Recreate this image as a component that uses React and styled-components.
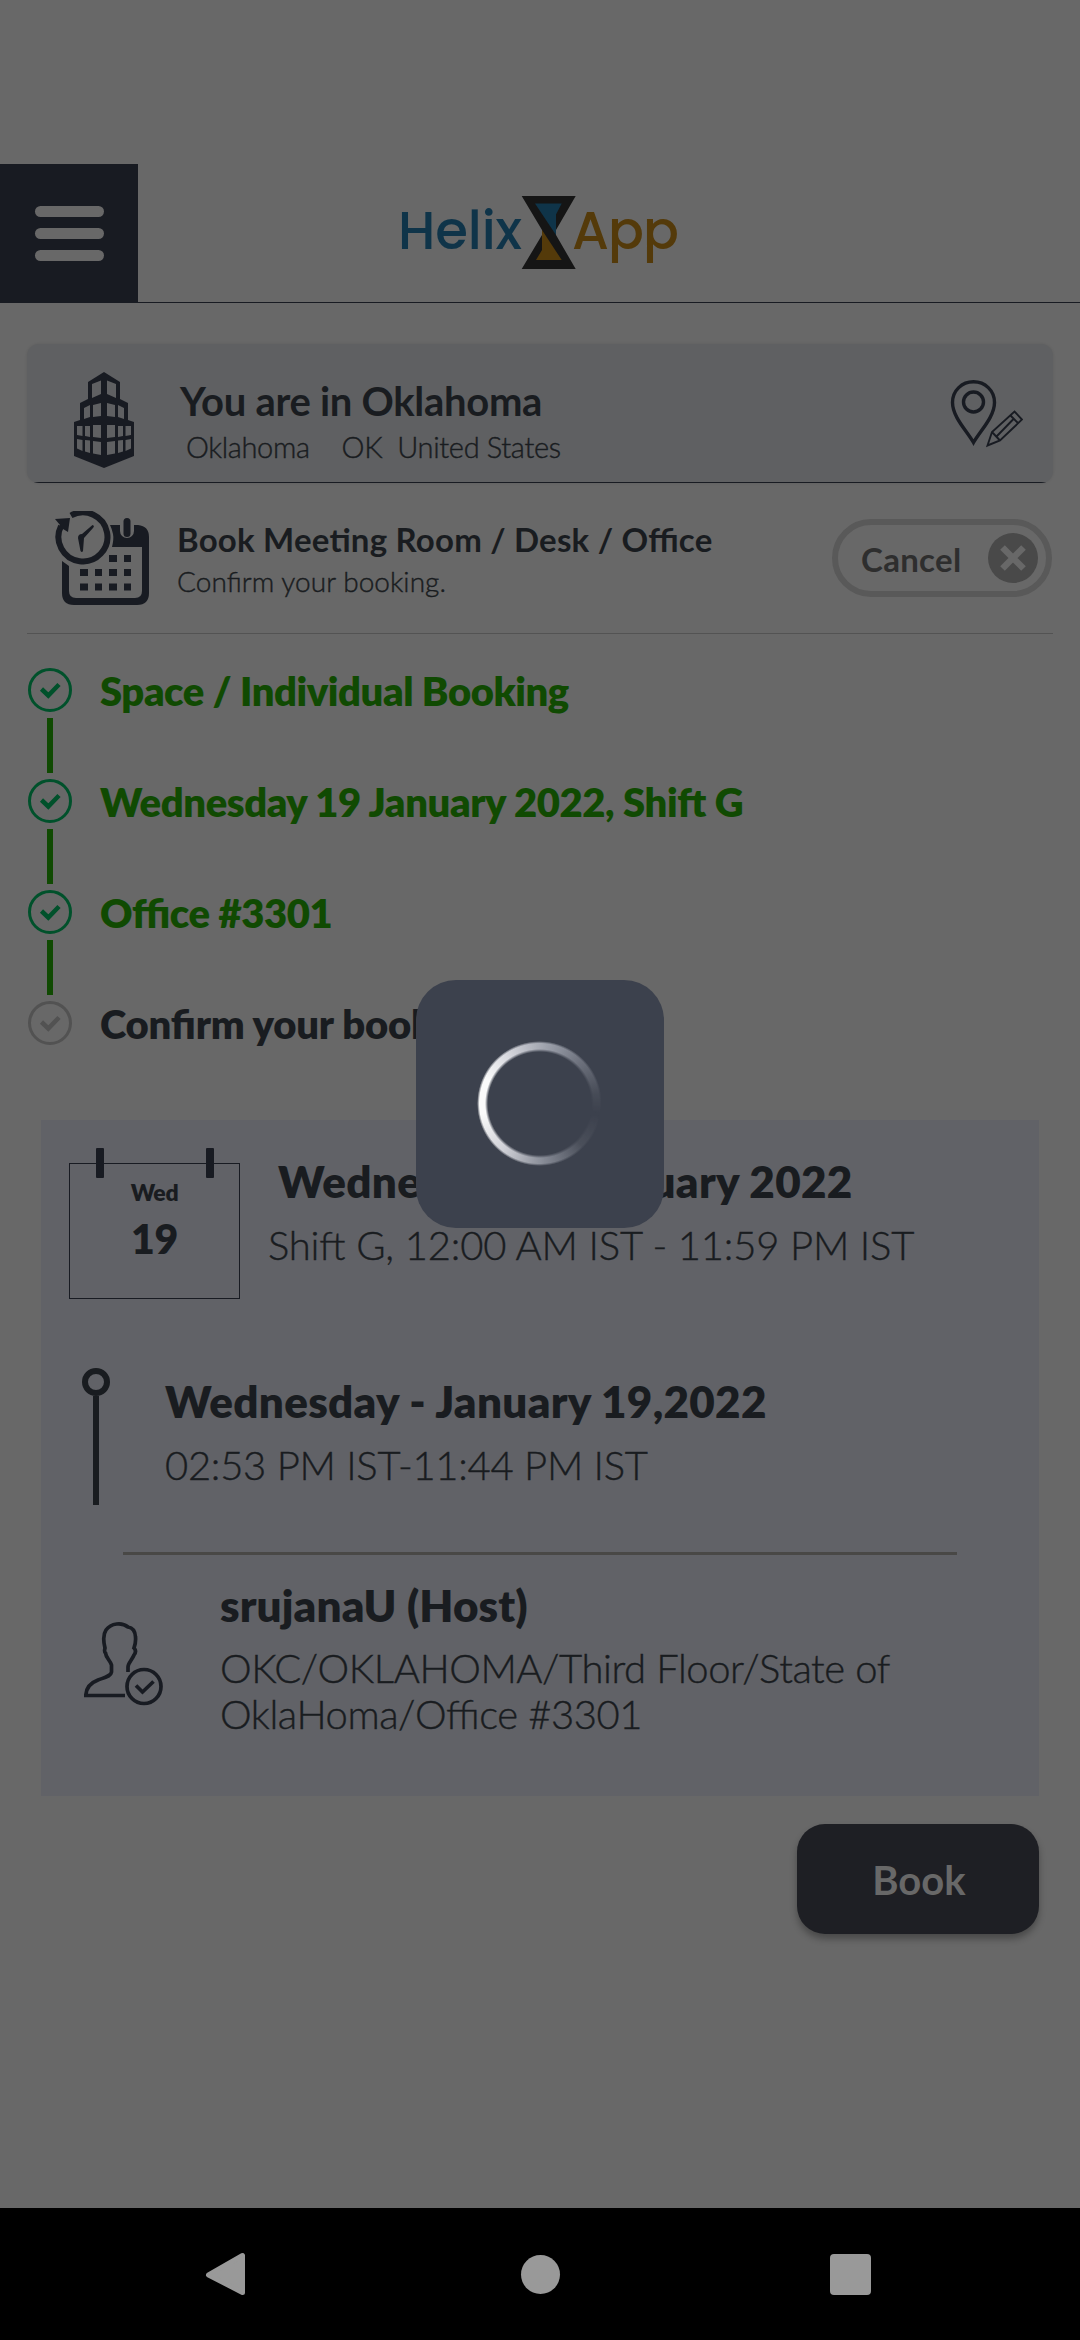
import React from "react";
import styled, { createGlobalStyle } from "styled-components";

const ink = "#191c20";
const navy = "#181b22";
const page = "#686868";
const logoBlue = "#0f3449";
const logoGold = "#543a0a";

const GlobalStyle = createGlobalStyle`
  * { box-sizing: border-box; }
  body { margin: 0; background: ${page}; }
`;

const Screen = styled.div`
  position: relative;
  width: 1080px;
  height: 2340px;
  overflow: hidden;
  display: flex;
  flex-direction: column;
  background: ${page};
  color: ${ink};
  font-family: Lato, "Liberation Sans", sans-serif;
  padding-top: 164px;
`;

const Header = styled.header`
  display: flex;
  height: 139px;
  flex: none;
  border-bottom: 1px solid ${navy};
`;

const MenuButton = styled.div`
  width: 138px;
  height: 138px;
  background: ${navy};
  display: flex;
  flex-direction: column;
  align-items: center;
  justify-content: center;
  gap: 11px;
`;

const MenuBar = styled.span`
  width: 69px;
  height: 11px;
  border-radius: 6px;
  background: ${page};
`;

const Logo = styled.svg`
  margin: 26px 0 0 258px;
  width: 290px;
  height: 90px;
`;

const LogoText = styled.text`
  font-family: Poppins, Inter, sans-serif;
  font-size: 53px;
  font-weight: 500;
  fill: ${(p) => p.$color};
`;

const Text = styled.div`
  font-size: ${(p) => p.$size}px;
  line-height: ${(p) => p.$line}px;
  font-weight: ${(p) => p.$weight || 300};
  letter-spacing: ${(p) => p.$spacing || 0}px;
  font-feature-settings: "liga" 1;
  -webkit-text-stroke: ${(p) => (p.$weight ? 0 : 0.4)}px currentColor;
  color: ${(p) => p.$color || ink};
  margin-top: ${(p) => p.$top || 0}px;
  margin-left: ${(p) => p.$left || 0}px;
  white-space: pre;
`;

const LocationCard = styled.section`
  display: flex;
  flex: none;
  margin: 41px 27px 0;
  height: 139px;
  padding: 28px 30px 0 47px;
  background: linear-gradient(${navy}, ${navy}) bottom / 100% 1px no-repeat #5f6062;
  border-radius: 12px;
  box-shadow: 0 0 3px rgba(0, 0, 0, 0.1);
`;

const Column = styled.div`
  display: flex;
  flex-direction: column;
  flex: ${(p) => (p.$grow ? 1 : "none")};
  padding-left: ${(p) => p.$left || 0}px;
  padding-top: ${(p) => p.$top || 0}px;
`;

const Places = styled.div`
  display: flex;
  margin: 4px 0 0 6px;
`;

const BookingHeader = styled.section`
  display: flex;
  flex: none;
  height: 151px;
  margin: 0 27px;
  padding: 28px 1px 0 28px;
  border-bottom: 1px solid #535353;
`;

const CancelButton = styled.div`
  display: flex;
  align-items: center;
  justify-content: space-between;
  width: 220px;
  height: 78px;
  margin-top: 8px;
  padding: 0 8px 0 23px;
  border: 6px solid #595959;
  border-radius: 39px;
`;

const Steps = styled.ol`
  list-style: none;
  flex: none;
  margin: 34px 0 0 28px;
  padding: 0;
`;

const Step = styled.li`
  display: flex;
  height: 111px;
`;

const StepMark = styled.div`
  display: flex;
  flex-direction: column;
  align-items: center;
  width: 44px;
`;

const Connector = styled.span`
  width: 6px;
  height: 55px;
  margin-top: 6px;
  background: #104a02;
`;

const Details = styled.section`
  flex: none;
  display: flex;
  flex-direction: column;
  width: 998px;
  height: 676px;
  margin: 8px 0 0 41px;
  background: #616267;
`;

const Row = styled.div`
  display: flex;
`;

const DateBox = styled.div`
  position: relative;
  width: 171px;
  height: 136px;
  margin: 43px 0 0 28px;
  border: 1px solid ${navy};
  display: flex;
  flex-direction: column;
  align-items: center;
`;

const Ring = styled.span`
  position: absolute;
  top: -16px;
  left: ${(p) => p.$left}px;
  width: 8px;
  height: 30px;
  border-radius: 1px;
  background: ${navy};
`;

const Marker = styled.div`
  display: flex;
  flex-direction: column;
  align-items: center;
  width: 28px;
  margin: 69px 0 0 41px;
`;

const MarkerDot = styled.span`
  width: 28px;
  height: 28px;
  border: 6px solid ${ink};
  border-radius: 50%;
`;

const MarkerLine = styled.span`
  width: 6px;
  height: 109px;
  background: ${ink};
`;

const Rule = styled.div`
  width: 834px;
  height: 3px;
  margin: 47px 0 0 82px;
  background: #494846;
`;

const BookButton = styled.div`
  flex: none;
  width: 242px;
  height: 110px;
  margin: 28px 0 0 797px;
  border-radius: 28px;
  background: #1e1f24;
  box-shadow: 0 5px 7px rgba(0, 0, 0, 0.3);
  display: flex;
  align-items: center;
  justify-content: center;
`;

const NavBar = styled.nav`
  height: 132px;
  margin-top: auto;
  background: #000;
  display: flex;
  justify-content: space-between;
  padding: 40px 205px;
`;

const Loader = styled.div`
  position: absolute;
  left: 416px;
  top: 980px;
  width: 248px;
  height: 248px;
  border-radius: 40px;
  background: #3c414d;
  display: flex;
  align-items: center;
  justify-content: center;
`;

const Spinner = styled.div`
  width: 125px;
  height: 125px;
  margin: 0 2px 1px 0;
  border-radius: 50%;
  background: conic-gradient(
    from 100deg,
    rgba(255, 255, 255, 0) 0deg,
    rgba(255, 255, 255, 0.08) 35deg,
    rgba(235, 238, 248, 0.42) 75deg,
    rgba(245, 245, 250, 0.8) 118deg,
    #fafafa 160deg,
    #fafafa 195deg,
    rgba(245, 245, 250, 0.85) 225deg,
    rgba(235, 238, 248, 0.55) 268deg,
    rgba(235, 238, 248, 0.28) 305deg,
    rgba(255, 255, 255, 0.06) 340deg,
    rgba(255, 255, 255, 0) 360deg
  );
  mask: radial-gradient(circle, transparent 51.5px, #000 54.5px, #000 60px, transparent 62.5px);
`;

const BuildingIcon = () => (
  <svg width="60" height="96" viewBox="0 0 60 96">
    <path fill={navy} d="M30 0L46 10V27L54 31V48L60 50V84L30 96L0 84V50L6 48V31L14 27V10Z" />
    <g fill="#5f6062">
      <path d="M18 12L27 8.500V22L18 26ZM33 8.500L42 12V26L33 22Z" />
      <path d="M10 36L16 33V45L10 47ZM19 33L27 31V44L19 45ZM33 31L41 33V45L33 44ZM44 33L50 36V47L44 45Z" />
      <path d="M3 54H8.500V64L3 63ZM11 54H16V65L11 64ZM19 53H27V66L19 65ZM33 53H41V65L33 66ZM44 54H49V64L44 65ZM51.500 54H57V63L51.500 64Z" />
      <path d="M3 67L8.500 68V79L3 76.500ZM11 68L16 68.500V81L11 79.500ZM19 69L27 70V83L19 81.500ZM33 70L41 69V81.500L33 83ZM44 68.500L49 68V79.500L44 81ZM51.500 68L57 67V76.500L51.500 79Z" />
    </g>
  </svg>
);

const PinEditIcon = () => (
  <svg width="74" height="70" viewBox="0 0 74 70" fill="none" stroke={navy}>
    <path strokeWidth="3.400" d="M24.500 62.500C18 51 3.500 37 3.500 22.500C3.500 10.500 13 1.700 24.500 1.700S45.500 10.500 45.500 22.500C45.500 37 31 51 24.500 62.500Z" />
    <circle cx="24.500" cy="22" r="10" strokeWidth="3.400" />
    <path strokeWidth="1.900" d="M38.500 65.500L43 52L65.500 31.500L73 39.500L51 60.500ZM43 52L51 60.500M61 35L69 43M64.500 39L48 56" />
  </svg>
);

const ScheduleIcon = () => (
  <svg width="94" height="94" viewBox="0 0 94 94">
    <path fill={navy} d="M55 14H65V20a7 7 0 0 0 14 0V14H83Q94 15 94 26V82Q94 94 82 94H19Q7 94 7 82V50L14 55V80Q14 87 21 87H80Q87 87 87 80V36H57Q59 28 58 23Q57 18 55 14Z" />
    <rect x="68.500" y="7" width="7" height="19" rx="3.500" fill={navy} />
    <path fill="none" stroke={navy} strokeWidth="6" d="M16 4.500A24.500 24.500 0 1 1 6 15" />
    <path fill={navy} d="M0 8L15 7L13 21L8 18L3 23L5 14Z" />
    <path fill={navy} d="M37.500 14Q40 15 38 17L29 27L28 40Q27 42 25.500 40L23 27Q23 23 27 23Z" />
    <path fill={navy} d="M54 44h8v7h-8ZM69 44h7v7h-7ZM25 58h8v7h-8ZM40 58h7v7h-7ZM54 58h8v7h-8ZM69 58h7v7h-7ZM25 72.500h8v7h-8ZM40 72.500h7v7h-7ZM54 72.500h8v7h-8ZM69 72.500h7v7h-7Z" />
  </svg>
);

const CheckCircle = ({ color }) => (
  <svg width="44" height="44" viewBox="0 0 44 44" fill="none" stroke={color}>
    <circle cx="22" cy="22" r="20.500" strokeWidth="3" />
    <path strokeWidth="4.500" d="M13.500 21L20.300 27.500L31 16.500" />
  </svg>
);

const CloseIcon = () => (
  <svg width="50" height="50" viewBox="0 0 50 50">
    <circle cx="25" cy="25" r="25" fill="#494949" />
    <path d="M14.500 14.500L35.500 35.500M35.500 14.500L14.500 35.500" stroke={page} strokeWidth="6.500" />
  </svg>
);

const HostIcon = () => (
  <svg width="80" height="84" viewBox="0 0 80 84" fill="none" stroke={navy} strokeWidth="3.700">
    <path d="M41 73.500H1.800C2 67 6 61 14 58C22 55 27 54 27.500 50V43C26 38 22 36 21.500 31Q20 30 21 26Q18 14 22 8C27 1 38 0 44 5Q51 6 51.500 15Q52 21 50 26Q53 29 50 33C48 38 44 41 44 45V50" />
    <circle cx="60" cy="64.500" r="17" />
    <path d="M52 63.500L58.500 70L69.500 59.500" />
  </svg>
);

const green = "#104a02";
const steps = [
  { label: "Space / Individual Booking", done: true, spacing: -0.47 },
  { label: "Wednesday 19 January 2022, Shift G", done: true, spacing: -0.42 },
  { label: "Office #3301", done: true, spacing: -0.42 },
  { label: "Confirm your booking", done: false, spacing: -0.2 },
];

export default function App() {
  return (
    <Screen>
      <GlobalStyle />
      <Header>
        <MenuButton>
          <MenuBar />
          <MenuBar />
          <MenuBar />
        </MenuButton>
        <Logo viewBox="396 190 290 90">
          <LogoText x="398" y="248.500" $color={logoBlue} textLength="124">Helix</LogoText>
          <path fill="#151515" d="M521.700 196H575.700L556 230V235L575.700 269H521.700L542 235V230Z" />
          <path fill={logoBlue} d="M535 203.500H561.700L556 214.500V235Z" />
          <path fill={logoGold} d="M542 230L561.700 260H536L542 250Z" />
          <LogoText x="572" y="248.500" $color={logoGold} textLength="107">App</LogoText>
        </Logo>
      </Header>

      <LocationCard>
        <BuildingIcon />
        <Column $grow $left={46} $top={5}>
          <Text $size={40} $line={48} $weight={700} $spacing={-0.3}>You are in Oklahoma</Text>
          <Places>
            <Text $size={29} $line={35} $spacing={-0.35}>Oklahoma</Text>
            <Text $size={29} $line={35} $spacing={-0.35} $left={32}>OK</Text>
            <Text $size={29} $line={35} $spacing={-0.35} $left={15}>United States</Text>
          </Places>
        </Column>
        <Column $top={8}>
          <PinEditIcon />
        </Column>
      </LocationCard>

      <BookingHeader>
        <ScheduleIcon />
        <Column $grow $left={28} $top={9}>
          <Text $size={33} $line={38} $weight={700} $spacing={0.2}>Book Meeting Room / Desk / Office</Text>
          <Text $size={28} $line={34} $top={6} $spacing={0.05}>Confirm your booking.</Text>
        </Column>
        <CancelButton>
          <Text $size={33} $line={38} $weight={700} $spacing={0.3} $top={1} $color="#2e2e2e">Cancel</Text>
          <CloseIcon />
        </CancelButton>
      </BookingHeader>

      <Steps>
        {steps.map((s) => (
          <Step key={s.label}>
            <StepMark>
              <CheckCircle color={s.done ? "#00512b" : "#525252"} />
              {s.done && <Connector />}
            </StepMark>
            <Text $size={40} $line={44} $left={28} $top={1} $weight={800} $spacing={s.spacing} $color={s.done ? green : ink}>{s.label}</Text>
          </Step>
        ))}
      </Steps>

      <Details>
        <Row>
          <DateBox>
            <Ring $left={26} />
            <Ring $left={136} />
            <Text $size={23} $line={28} $weight={800} $spacing={-0.3} $top={14}>Wed</Text>
            <Text $size={41} $line={48} $weight={800} $spacing={-0.3} $top={9}>19</Text>
          </DateBox>
          <Column $left={28} $top={35}>
            <Text $size={44} $line={52} $weight={800} $spacing={0.3} $left={10}>Wednesday 19 January 2022</Text>
            <Text $size={40} $line={48} $spacing={-0.17} $top={14}>Shift G, 12:00 AM IST - 11:59 PM IST</Text>
          </Column>
        </Row>
        <Row>
          <Marker>
            <MarkerDot />
            <MarkerLine />
          </Marker>
          <Column $left={55} $top={76}>
            <Text $size={44} $line={52} $weight={800} $spacing={0.28}>Wednesday - January 19,2022</Text>
            <Text $size={40} $line={48} $spacing={-0.27} $top={14}>02:53 PM IST-11:44 PM IST</Text>
          </Column>
        </Row>
        <Rule />
        <Row>
          <Column $left={43} $top={67}>
            <HostIcon />
          </Column>
          <Column $left={56} $top={24}>
            <Text $size={44} $line={52} $weight={800} $spacing={0.1}>srujanaU (Host)</Text>
            <Text $size={40} $line={46} $spacing={-0.43} $top={14}>{"OKC/OKLAHOMA/Third Floor/State of\nOklaHoma/Office #3301"}</Text>
          </Column>
        </Row>
      </Details>

      <BookButton>
        <Text $size={40} $line={48} $weight={700} $top={2} $left={2} $color={page}>Book</Text>
      </BookButton>

      <NavBar>
        <svg width="42" height="52" viewBox="0 0 42 52">
          <path d="M37.500 6.500V43.500L3.500 26Z" transform="translate(0 1)" fill="#999" stroke="#999" strokeWidth="5" strokeLinejoin="round" />
        </svg>
        <svg width="46" height="52" viewBox="0 0 46 52">
          <circle cx="25.500" cy="26.500" r="19.500" fill="#999" />
        </svg>
        <svg width="46" height="52" viewBox="0 0 46 52">
          <rect x="1" y="6" width="41" height="41" rx="4" fill="#999" />
        </svg>
      </NavBar>

      <Loader>
        <Spinner />
      </Loader>
    </Screen>
  );
}
